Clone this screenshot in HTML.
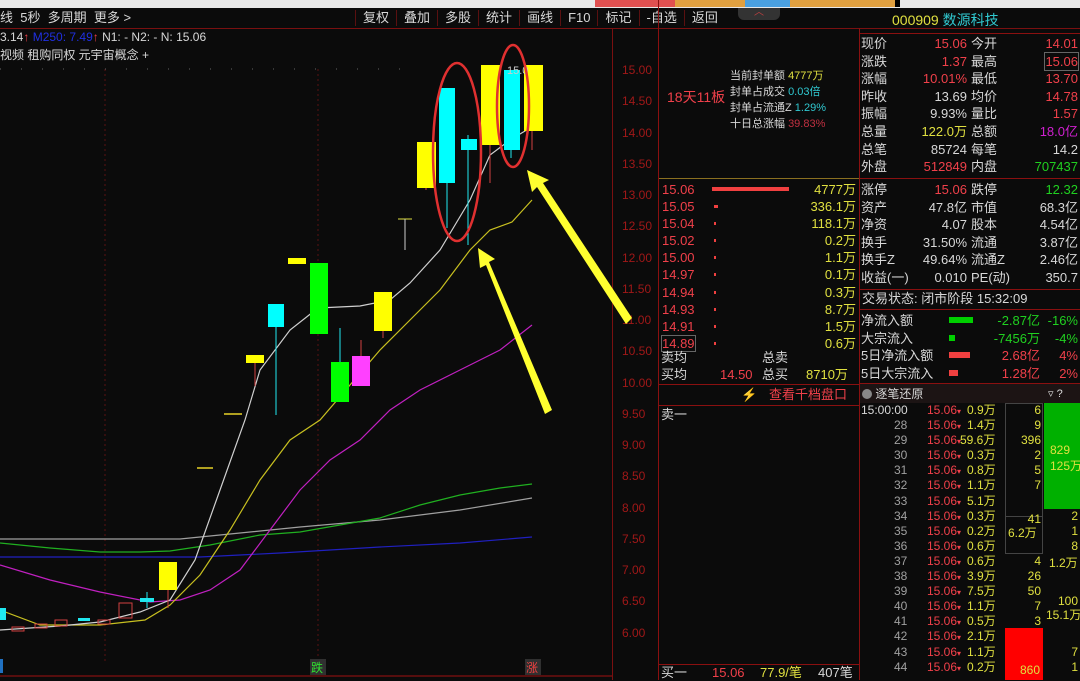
<!DOCTYPE html>
<html><head><meta charset="utf-8"><style>
*{margin:0;padding:0;box-sizing:border-box}
body{width:1080px;height:680px;background:#0b0b0b;position:relative;overflow:hidden;font-family:"Liberation Sans","Noto Sans CJK SC",sans-serif;font-size:13px;color:#ccc}
.a{position:absolute;white-space:nowrap;line-height:16px}
.r{color:#f0404a}.y{color:#e0e040}.g{color:#20d020}.w{color:#d8d8d8}.c{color:#30c8d0}.m{color:#d020d0}.gr{color:#a0a0a0}
.hl{position:absolute;height:1px;background:#7a1010}
.vl{position:absolute;width:1px;background:#7a1010}
.tb span{display:inline-block;padding:0 7px;border-left:1px solid #5a1010}
</style></head><body>
<div class="a" style="left:0;top:0;width:1080px;height:8px;background:#e8e8e8"></div>
<div class="a" style="left:595px;top:0;width:300px;height:7px;background:#e0a040"></div>
<div class="a" style="left:595px;top:0;width:80px;height:7px;background:#e05050"></div>
<div class="a" style="left:745px;top:0;width:45px;height:7px;background:#4aa0e0"></div>
<div class="a" style="left:895px;top:0;width:5px;height:7px;background:#000"></div>
<div class="a" style="left:0;top:8px;width:1080px;height:20px;background:#0b0b0b"></div>
<div class="a w" style="left:0;top:10px;font-size:13px">线&nbsp; 5秒&nbsp; 多周期&nbsp; 更多 &gt;</div>
<div class="a w tb" style="left:355px;top:10px;width:303px;text-align:right;font-size:13px"><span>复权</span><span>叠加</span><span>多股</span><span>统计</span><span>画线</span><span>F10</span><span>标记</span><span>-自选</span><span>返回</span></div>
<div class="hl" style="left:0;top:28px;width:1080px"></div>
<div class="a w" style="left:0;top:29px;font-size:12px">3.14<span class="r">↑</span> <span style="color:#2030e0">M250: 7.49</span><span class="r">↑</span> N1: - N2: - N: 15.06</div>
<div class="a w" style="left:0;top:47px;font-size:12px">视频 租购同权 元宇宙概念 +</div>
<div class="vl" style="left:612px;top:28px;height:652px"></div>
<div class="vl" style="left:658px;top:0;height:680px;background:#8a1010"></div>
<div class="vl" style="left:859px;top:28px;height:652px;background:#8a1010"></div>

<svg class="a" style="left:0;top:0" width="660" height="680">
<g fill="#a01818" font-size="12" font-family="Liberation Sans">
<text x="622" y="74">15.00</text><text x="622" y="105">14.50</text><text x="622" y="137">14.00</text><text x="622" y="168">13.50</text><text x="622" y="199">13.00</text><text x="622" y="230">12.50</text><text x="622" y="262">12.00</text><text x="622" y="293">11.50</text><text x="622" y="324">11.00</text><text x="622" y="355">10.50</text><text x="622" y="387">10.00</text><text x="622" y="418">9.50</text><text x="622" y="449">9.00</text><text x="622" y="480">8.50</text><text x="622" y="512">8.00</text><text x="622" y="543">7.50</text><text x="622" y="574">7.00</text><text x="622" y="605">6.50</text><text x="622" y="637">6.00</text>
</g>
<line x1="105" y1="69" x2="105" y2="662" stroke="#5a1010" stroke-dasharray="2,3"/>
<line x1="318" y1="69" x2="318" y2="662" stroke="#5a1010" stroke-dasharray="2,3"/>
<line x1="0" y1="69" x2="420" y2="69" stroke="#666" stroke-dasharray="1,20"/>
<line x1="0" y1="676" x2="612" y2="676" stroke="#a01010"/>
<g fill="none" stroke-width="1.2">
<polyline stroke="#2020c0" points="0,557 200,557 280,553 380,547 460,543 532,537"/>
<polyline stroke="#a0a0a0" points="0,539 180,539 240,533 300,527 380,520 460,510 532,498"/>
<polyline stroke="#20b020" points="0,543 50,548 100,552 140,552 170,551 210,545 260,535 300,532 340,525 380,518 420,505 460,495 500,488 532,484"/>
<polyline stroke="#c020c0" points="0,565 50,580 100,592 150,602 180,600 210,590 240,570 270,530 300,490 330,460 360,440 390,410 420,390 460,370 500,350 532,325"/>
<polyline stroke="#c8c020" points="0,610 40,625 100,625 145,620 170,605 200,575 230,530 260,480 290,440 320,420 350,385 380,350 410,320 440,290 470,250 490,230 512,222 532,200"/>
<polyline stroke="#d0d0d0" points="0,630 60,626 100,622 140,612 170,600 195,560 220,490 245,420 260,370 290,330 318,308 360,306 390,300 410,283 440,250 470,200 490,155 510,140 530,128"/>
</g>
<g>
<rect x="0" y="608" width="6" height="12" fill="#20e8f0"/>
<rect x="12" y="627" width="12" height="4" fill="none" stroke="#d04040"/>
<rect x="35" y="624" width="12" height="4" fill="none" stroke="#d04040"/>
<rect x="55" y="620" width="12" height="6" fill="none" stroke="#d04040"/>
<rect x="78" y="618" width="12" height="3" fill="#20e8f0"/>
<rect x="98" y="620" width="12" height="4" fill="none" stroke="#d04040"/>
<rect x="119" y="603" width="13" height="15" fill="none" stroke="#d04040"/>
<line x1="147" y1="592" x2="147" y2="608" stroke="#20e8f0"/><rect x="140" y="598" width="14" height="4" fill="#20e8f0"/>
<line x1="168" y1="590" x2="168" y2="608" stroke="#d04040"/><rect x="159" y="562" width="18" height="28" fill="#ffff00"/>
<rect x="197" y="467" width="16" height="2" fill="#b0a020"/>
<rect x="224" y="413" width="18" height="2" fill="#b0a020"/>
<line x1="255" y1="363" x2="255" y2="386" stroke="#d04040"/><rect x="246" y="355" width="18" height="8" fill="#ffff00"/>
<line x1="276" y1="327" x2="276" y2="415" stroke="#20e8f0"/><rect x="268" y="304" width="16" height="23" fill="#00ffff"/>
<rect x="288" y="258" width="18" height="6" fill="#ffff00"/>
<rect x="310" y="263" width="18" height="71" fill="#00ff00"/>
<line x1="340" y1="328" x2="340" y2="402" stroke="#20e8f0"/><rect x="331" y="362" width="18" height="40" fill="#00ff00"/>
<line x1="361" y1="340" x2="361" y2="386" stroke="#d04040"/><rect x="352" y="356" width="18" height="30" fill="#ff40ff"/>
<line x1="383" y1="331" x2="383" y2="338" stroke="#d04040"/><rect x="374" y="292" width="18" height="39" fill="#ffff00"/>
<line x1="398" y1="219" x2="412" y2="219" stroke="#e0e040"/><line x1="405" y1="219" x2="405" y2="250" stroke="#ccc"/>
<line x1="426" y1="187" x2="426" y2="190" stroke="#d04040"/><rect x="417" y="142" width="19" height="46" fill="#ffff00"/>
<line x1="447" y1="183" x2="447" y2="228" stroke="#20e8f0"/><rect x="439" y="88" width="16" height="95" fill="#00ffff"/>
<line x1="468" y1="135" x2="468" y2="245" stroke="#20e8f0"/><rect x="461" y="139" width="16" height="11" fill="#00ffff"/>
<line x1="490" y1="145" x2="490" y2="183" stroke="#d04040"/><rect x="481" y="65" width="19" height="80" fill="#ffff00"/>
<line x1="511" y1="150" x2="511" y2="158" stroke="#20e8f0"/><rect x="504" y="70" width="16" height="80" fill="#00ffff"/>
<line x1="532" y1="131" x2="532" y2="150" stroke="#d04040"/><rect x="524" y="65" width="19" height="66" fill="#ffff00"/>
<text x="507" y="74" fill="#ccc" font-size="11">15.0</text>
</g>
<ellipse cx="457" cy="152" rx="24" ry="89" fill="none" stroke="#e03030" stroke-width="2.5"/>
<ellipse cx="513" cy="106" rx="16" ry="61" fill="none" stroke="#e03030" stroke-width="2.5"/>
<g fill="#ffff30">
<polygon points="545,414 552,410 489,262 495,259 478,248 480,268 486,265"/>
<polygon points="626,324 632,318 543,183 549,180 527,170 532,192 537,187"/>
</g>
<rect x="310" y="659" width="16" height="16" fill="#303030"/><text x="311" y="672" fill="#30e030" font-size="12">跌</text>
<rect x="525" y="659" width="16" height="16" fill="#303030"/><text x="526" y="672" fill="#f04040" font-size="12">涨</text>
<rect x="0" y="659" width="3" height="14" fill="#2070c0"/>
</svg>

<!-- middle panel -->
<div class="a" style="left:738px;top:8px;width:42px;height:12px;background:#333;border-radius:0 0 6px 6px;color:#c04040;font-size:10px;text-align:center;line-height:10px">︿</div>
<div class="a r" style="left:667px;top:89px;font-size:14px">18天11板</div>
<div class="a w" style="left:730px;top:68px;font-size:11px">当前封单额 <span class="y">4777万</span></div>
<div class="a w" style="left:730px;top:84px;font-size:11px">封单占成交 <span class="c">0.03倍</span></div>
<div class="a w" style="left:730px;top:100px;font-size:11px">封单占流通Z <span class="c">1.29%</span></div>
<div class="a w" style="left:730px;top:116px;font-size:11px">十日总涨幅 <span style="color:#c03040">39.83%</span></div>
<div class="hl" style="left:659px;top:178px;width:200px;background:#8a7020"></div>
<div class="a" style="left:662px;top:181px;width:194px;font-size:13px;line-height:17.1px">
<div style="position:relative"><span class="r">15.06</span><span style="position:absolute;left:50px;top:6px;width:77px;height:4px;background:#f04040"></span><span class="y" style="float:right">4777万</span></div>
<div style="position:relative"><span class="r">15.05</span><span style="position:absolute;left:52px;top:7px;width:4px;height:3px;background:#f04040"></span><span class="y" style="float:right">336.1万</span></div>
<div style="position:relative"><span class="r">15.04</span><span style="position:absolute;left:52px;top:7px;width:2px;height:3px;background:#f04040"></span><span class="y" style="float:right">118.1万</span></div>
<div style="position:relative"><span class="r">15.02</span><span style="position:absolute;left:52px;top:7px;width:2px;height:3px;background:#f04040"></span><span class="y" style="float:right">0.2万</span></div>
<div style="position:relative"><span class="r">15.00</span><span style="position:absolute;left:52px;top:7px;width:2px;height:3px;background:#f04040"></span><span class="y" style="float:right">1.1万</span></div>
<div style="position:relative"><span class="r">14.97</span><span style="position:absolute;left:52px;top:7px;width:2px;height:3px;background:#f04040"></span><span class="y" style="float:right">0.1万</span></div>
<div style="position:relative"><span class="r">14.94</span><span style="position:absolute;left:52px;top:7px;width:2px;height:3px;background:#f04040"></span><span class="y" style="float:right">0.3万</span></div>
<div style="position:relative"><span class="r">14.93</span><span style="position:absolute;left:52px;top:7px;width:2px;height:3px;background:#f04040"></span><span class="y" style="float:right">8.7万</span></div>
<div style="position:relative"><span class="r">14.91</span><span style="position:absolute;left:52px;top:7px;width:2px;height:3px;background:#f04040"></span><span class="y" style="float:right">1.5万</span></div>
<div style="position:relative"><span class="r" style="outline:1px solid #666">14.89</span><span style="position:absolute;left:52px;top:7px;width:2px;height:3px;background:#f04040"></span><span class="y" style="float:right">0.6万</span></div>
</div>
<div class="a w" style="left:661px;top:350px;font-size:13px">卖均</div><div class="a w" style="left:762px;top:350px;font-size:13px">总卖</div>
<div class="a w" style="left:661px;top:367px;font-size:13px">买均</div><div class="a r" style="left:720px;top:367px">14.50</div><div class="a w" style="left:762px;top:367px">总买</div><div class="a y" style="left:806px;top:367px">8710万</div>
<div class="hl" style="left:659px;top:384px;width:200px;background:#8a1010"></div>
<div class="a" style="left:741px;top:387px;color:#a08020">⚡</div><div class="a r" style="left:769px;top:387px">查看千档盘口</div>
<div class="hl" style="left:659px;top:405px;width:200px;background:#8a1010"></div>
<div class="a w" style="left:661px;top:407px">卖一</div>
<div class="hl" style="left:659px;top:664px;width:200px;background:#8a1010"></div>
<div class="a w" style="left:661px;top:665px">买一</div><div class="a r" style="left:712px;top:665px">15.06</div><div class="a y" style="left:760px;top:665px">77.9/笔</div><div class="a w" style="left:818px;top:665px">407笔</div>

<!-- right info panel -->
<div class="a" style="left:892px;top:12px;font-size:14px"><span class="y">000909</span> <span class="c">数源科技</span></div>
<div class="hl" style="left:860px;top:33px;width:220px;background:#8a1010"></div>
<div class="a" style="left:861px;top:35px;width:219px;font-size:13px;line-height:17.6px">
<div><span class="w">现价</span><span class="r" style="position:absolute;left:46px;width:60px;text-align:right">15.06</span><span class="w" style="position:absolute;left:110px">今开</span><span class="r" style="position:absolute;right:2px">14.01</span></div>
<div><span class="w">涨跌</span><span class="r" style="position:absolute;left:46px;width:60px;text-align:right">1.37</span><span class="w" style="position:absolute;left:110px">最高</span><span class="r" style="position:absolute;right:2px;outline:1px solid #666">15.06</span></div>
<div><span class="w">涨幅</span><span class="r" style="position:absolute;left:46px;width:60px;text-align:right">10.01%</span><span class="w" style="position:absolute;left:110px">最低</span><span class="r" style="position:absolute;right:2px">13.70</span></div>
<div><span class="w">昨收</span><span class="w" style="position:absolute;left:46px;width:60px;text-align:right">13.69</span><span class="w" style="position:absolute;left:110px">均价</span><span class="r" style="position:absolute;right:2px">14.78</span></div>
<div><span class="w">振幅</span><span class="w" style="position:absolute;left:46px;width:60px;text-align:right">9.93%</span><span class="w" style="position:absolute;left:110px">量比</span><span class="r" style="position:absolute;right:2px">1.57</span></div>
<div><span class="w">总量</span><span class="y" style="position:absolute;left:46px;width:60px;text-align:right">122.0万</span><span class="w" style="position:absolute;left:110px">总额</span><span class="m" style="position:absolute;right:2px">18.0亿</span></div>
<div><span class="w">总笔</span><span class="w" style="position:absolute;left:46px;width:60px;text-align:right">85724</span><span class="w" style="position:absolute;left:110px">每笔</span><span class="w" style="position:absolute;right:2px">14.2</span></div>
<div><span class="w">外盘</span><span class="r" style="position:absolute;left:46px;width:60px;text-align:right">512849</span><span class="w" style="position:absolute;left:110px">内盘</span><span class="g" style="position:absolute;right:2px">707437</span></div>
</div>
<div class="hl" style="left:860px;top:178px;width:220px;background:#8a1010"></div>
<div class="a" style="left:861px;top:181px;width:219px;font-size:13px;line-height:17.6px">
<div><span class="w">涨停</span><span class="r" style="position:absolute;left:46px;width:60px;text-align:right">15.06</span><span class="w" style="position:absolute;left:110px">跌停</span><span class="g" style="position:absolute;right:2px">12.32</span></div>
<div><span class="w">资产</span><span class="w" style="position:absolute;left:46px;width:60px;text-align:right">47.8亿</span><span class="w" style="position:absolute;left:110px">市值</span><span class="w" style="position:absolute;right:2px">68.3亿</span></div>
<div><span class="w">净资</span><span class="w" style="position:absolute;left:46px;width:60px;text-align:right">4.07</span><span class="w" style="position:absolute;left:110px">股本</span><span class="w" style="position:absolute;right:2px">4.54亿</span></div>
<div><span class="w">换手</span><span class="w" style="position:absolute;left:46px;width:60px;text-align:right">31.50%</span><span class="w" style="position:absolute;left:110px">流通</span><span class="w" style="position:absolute;right:2px">3.87亿</span></div>
<div><span class="w">换手Z</span><span class="w" style="position:absolute;left:46px;width:60px;text-align:right">49.64%</span><span class="w" style="position:absolute;left:110px">流通Z</span><span class="w" style="position:absolute;right:2px">2.46亿</span></div>
<div><span class="w">收益(一)</span><span class="w" style="position:absolute;left:46px;width:60px;text-align:right">0.010</span><span class="w" style="position:absolute;left:110px">PE(动)</span><span class="w" style="position:absolute;right:2px">350.7</span></div>
</div>
<div class="hl" style="left:860px;top:289px;width:220px;background:#8a1010"></div>
<div class="a w" style="left:862px;top:291px">交易状态: 闭市阶段 15:32:09</div>
<div class="hl" style="left:860px;top:309px;width:220px;background:#8a1010"></div>
<div class="a" style="left:861px;top:312px;width:219px;font-size:13px;line-height:17.6px">
<div><span class="w">净流入额</span><span style="position:absolute;left:88px;top:5px;width:24px;height:6px;background:#00d000"></span><span class="g" style="position:absolute;right:40px">-2.87亿</span><span class="g" style="position:absolute;right:2px">-16%</span></div>
<div><span class="w">大宗流入</span><span style="position:absolute;left:88px;top:23px;width:6px;height:6px;background:#00d000"></span><span class="g" style="position:absolute;right:40px">-7456万</span><span class="g" style="position:absolute;right:2px">-4%</span></div>
<div><span class="w">5日净流入额</span><span style="position:absolute;left:88px;top:40px;width:21px;height:6px;background:#f04040"></span><span class="r" style="position:absolute;right:40px">2.68亿</span><span class="r" style="position:absolute;right:2px">4%</span></div>
<div><span class="w">5日大宗流入</span><span style="position:absolute;left:88px;top:58px;width:9px;height:6px;background:#f04040"></span><span class="r" style="position:absolute;right:40px">1.28亿</span><span class="r" style="position:absolute;right:2px">2%</span></div>
</div>
<div class="hl" style="left:860px;top:383px;width:220px;background:#8a1010"></div>
<div class="a" style="left:860px;top:384px;width:220px;height:19px;background:#1c1414"></div>
<div class="a w" style="left:862px;top:386px;font-size:12px"><span style="display:inline-block;width:10px;height:10px;border-radius:5px;background:#888;vertical-align:-1px"></span> 逐笔还原</div>
<div class="a w" style="left:1048px;top:386px;font-size:11px">▿ ?</div>
<div class="a" style="left:1005px;top:403px;width:38px;height:114px;border:1px solid #444"></div>
<div class="a" style="left:1044px;top:403px;width:36px;height:106px;background:#00b000"></div>
<div class="a" style="left:1005px;top:493px;width:38px;height:61px;border:1px solid #444;border-top:0"></div>
<div class="a" style="left:1005px;top:628px;width:38px;height:52px;background:#ff0000"></div>
<div class="a y" style="left:1050px;top:442px;font-size:12px">829<br>125万</div>
<div class="a y" style="left:1013px;top:511px;font-size:12px;text-align:right;width:28px">41<br></div>
<div class="a y" style="left:1008px;top:525px;font-size:12px">6.2万</div>
<div class="a y" style="left:1049px;top:555px;font-size:12px">1.2万</div>
<div class="a y" style="left:1058px;top:593px;font-size:12px">100</div>
<div class="a y" style="left:1046px;top:607px;font-size:12px">15.1万</div>
<div class="a y" style="left:1020px;top:662px;font-size:12px">860</div>
<div class="a" style="left:861px;top:403px;width:219px;font-size:12px;line-height:15.1px">
<div><span class="w">15:00:00</span><span class="r" style="position:absolute;left:66px">15.06<span style="font-size:8px">▾</span></span><span class="y" style="position:absolute;left:106px">0.9万</span><span class="y" style="position:absolute;left:168px;width:12px;text-align:right">6</span></div>
<div><span class="gr" style="padding-left:33px">28</span><span class="r" style="position:absolute;left:66px">15.06<span style="font-size:8px">▾</span></span><span class="y" style="position:absolute;left:106px">1.4万</span><span class="y" style="position:absolute;left:168px;width:12px;text-align:right">9</span></div>
<div><span class="gr" style="padding-left:33px">29</span><span class="r" style="position:absolute;left:66px">15.06<span style="font-size:8px">▾</span></span><span class="y" style="position:absolute;left:99px">59.6万</span><span class="y" style="position:absolute;left:160px;width:20px;text-align:right">396</span></div>
<div><span class="gr" style="padding-left:33px">30</span><span class="r" style="position:absolute;left:66px">15.06<span style="font-size:8px">▾</span></span><span class="y" style="position:absolute;left:106px">0.3万</span><span class="y" style="position:absolute;left:168px;width:12px;text-align:right">2</span></div>
<div><span class="gr" style="padding-left:33px">31</span><span class="r" style="position:absolute;left:66px">15.06<span style="font-size:8px">▾</span></span><span class="y" style="position:absolute;left:106px">0.8万</span><span class="y" style="position:absolute;left:168px;width:12px;text-align:right">5</span></div>
<div><span class="gr" style="padding-left:33px">32</span><span class="r" style="position:absolute;left:66px">15.06<span style="font-size:8px">▾</span></span><span class="y" style="position:absolute;left:106px">1.1万</span><span class="y" style="position:absolute;left:168px;width:12px;text-align:right">7</span></div>
<div><span class="gr" style="padding-left:33px">33</span><span class="r" style="position:absolute;left:66px">15.06<span style="font-size:8px">▾</span></span><span class="y" style="position:absolute;left:106px">5.1万</span></div>
<div><span class="gr" style="padding-left:33px">34</span><span class="r" style="position:absolute;left:66px">15.06<span style="font-size:8px">▾</span></span><span class="y" style="position:absolute;left:106px">0.3万</span><span class="y" style="position:absolute;right:2px">2</span></div>
<div><span class="gr" style="padding-left:33px">35</span><span class="r" style="position:absolute;left:66px">15.06<span style="font-size:8px">▾</span></span><span class="y" style="position:absolute;left:106px">0.2万</span><span class="y" style="position:absolute;right:2px">1</span></div>
<div><span class="gr" style="padding-left:33px">36</span><span class="r" style="position:absolute;left:66px">15.06<span style="font-size:8px">▾</span></span><span class="y" style="position:absolute;left:106px">0.6万</span><span class="y" style="position:absolute;right:2px">8</span></div>
<div><span class="gr" style="padding-left:33px">37</span><span class="r" style="position:absolute;left:66px">15.06<span style="font-size:8px">▾</span></span><span class="y" style="position:absolute;left:106px">0.6万</span><span class="y" style="position:absolute;left:168px;width:12px;text-align:right">4</span></div>
<div><span class="gr" style="padding-left:33px">38</span><span class="r" style="position:absolute;left:66px">15.06<span style="font-size:8px">▾</span></span><span class="y" style="position:absolute;left:106px">3.9万</span><span class="y" style="position:absolute;left:160px;width:20px;text-align:right">26</span></div>
<div><span class="gr" style="padding-left:33px">39</span><span class="r" style="position:absolute;left:66px">15.06<span style="font-size:8px">▾</span></span><span class="y" style="position:absolute;left:106px">7.5万</span><span class="y" style="position:absolute;left:160px;width:20px;text-align:right">50</span></div>
<div><span class="gr" style="padding-left:33px">40</span><span class="r" style="position:absolute;left:66px">15.06<span style="font-size:8px">▾</span></span><span class="y" style="position:absolute;left:106px">1.1万</span><span class="y" style="position:absolute;left:168px;width:12px;text-align:right">7</span></div>
<div><span class="gr" style="padding-left:33px">41</span><span class="r" style="position:absolute;left:66px">15.06<span style="font-size:8px">▾</span></span><span class="y" style="position:absolute;left:106px">0.5万</span><span class="y" style="position:absolute;left:168px;width:12px;text-align:right">3</span></div>
<div><span class="gr" style="padding-left:33px">42</span><span class="r" style="position:absolute;left:66px">15.06<span style="font-size:8px">▾</span></span><span class="y" style="position:absolute;left:106px">2.1万</span></div>
<div><span class="gr" style="padding-left:33px">43</span><span class="r" style="position:absolute;left:66px">15.06<span style="font-size:8px">▾</span></span><span class="y" style="position:absolute;left:106px">1.1万</span><span class="y" style="position:absolute;right:2px">7</span></div>
<div><span class="gr" style="padding-left:33px">44</span><span class="r" style="position:absolute;left:66px">15.06<span style="font-size:8px">▾</span></span><span class="y" style="position:absolute;left:106px">0.2万</span><span class="y" style="position:absolute;right:2px">1</span></div>
</div>
</body></html>
